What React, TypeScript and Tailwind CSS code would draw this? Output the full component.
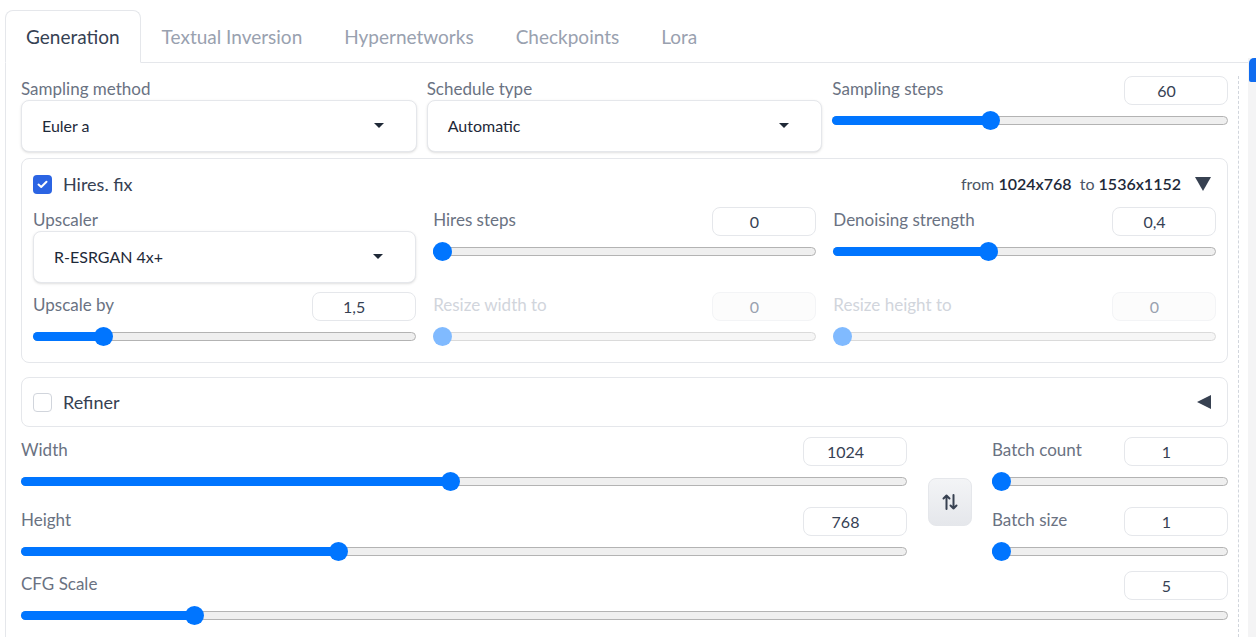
import React from 'react';

const BLUE = 'bg-[#0075ff]';

interface SliderProps {
  value: number;
  min: number;
  max: number;
  disabled?: boolean;
}

const Slider: React.FC<SliderProps> = ({ value, min, max, disabled }) => {
  const frac = (value - min) / (max - min);
  return (
    <div className="relative h-[30px] flex items-center">
      <div
        className={`relative w-full h-[9px] rounded-full border ${
          disabled ? 'bg-[#f6f6f6] border-[#dadada]' : 'bg-[#efefef] border-[#b3b3b3]'
        }`}
      >
        {!disabled && (
          <div
            className={`absolute -left-px -top-px -bottom-px rounded-full ${BLUE}`}
            style={{ width: `calc(${frac} * (100% - 19px) + 11px)` }}
          />
        )}
      </div>
      <div
        className={`absolute w-[19px] h-[19px] rounded-full ${disabled ? 'bg-[#80baff]' : BLUE}`}
        style={{ left: `calc(${frac} * (100% - 19px))` }}
      />
    </div>
  );
};

const NumberBox: React.FC<{ value: string; disabled?: boolean }> = ({ value, disabled }) => (
  <div
    className={`w-[104px] h-[29px] rounded-lg border flex items-center justify-center pr-[19px] text-[16px] ${
      disabled ? 'border-gray-100 bg-[#fcfcfc] text-gray-400' : 'border-gray-200 bg-white text-gray-700'
    }`}
  >
    {value}
  </div>
);

interface FieldProps extends SliderProps {
  label: string;
  display: string;
}

const SliderField: React.FC<FieldProps> = ({ label, display, ...rest }) => (
  <div className="flex flex-col">
    <div className="flex items-start justify-between h-[29px]">
      <span className={`relative top-px leading-[24px] text-[17px] ${rest.disabled ? 'text-gray-300' : 'text-gray-500'}`}>
        {label}
      </span>
      <NumberBox value={display} disabled={rest.disabled} />
    </div>
    <Slider {...rest} />
  </div>
);

const Caret = () => (
  <svg width="10" height="6" viewBox="0 0 10 6" className="mr-[10px]">
    <polygon points="0,0 10,0 5,5" fill="#1f2937" />
  </svg>
);

const Dropdown: React.FC<{ label: string; value: string }> = ({ label, value }) => (
  <div className="flex flex-col">
    <span className="relative top-px leading-[24px] text-[17px] text-gray-500">{label}</span>
    <div className="h-[52px] rounded-lg border border-gray-200 shadow-sm bg-white flex items-center justify-between pl-[20px] pr-[22px] text-[16px] text-gray-800">
      <span>{value}</span>
      <Caret />
    </div>
  </div>
);

const Checkbox: React.FC<{ checked?: boolean }> = ({ checked }) =>
  checked ? (
    <div className="w-[19px] h-[19px] rounded-[4px] bg-[#2b64e3] flex items-center justify-center">
      <svg width="11" height="9" viewBox="0 0 11 9">
        <path d="M1.5 4.6 L4.2 7 L9.5 1.8" fill="none" stroke="white" strokeWidth="2" strokeLinecap="round" strokeLinejoin="round" />
      </svg>
    </div>
  ) : (
    <div className="w-[19px] h-[19px] rounded-[4px] border border-gray-300 bg-white" />
  );

const tabs = ['Textual Inversion', 'Hypernetworks', 'Checkpoints', 'Lora'];

export default function App() {
  return (
    <div className="w-[1256px] h-[637px] overflow-hidden bg-white flex font-['Source_Sans_Pro','Lato',sans-serif]">
      <div className="w-[1243px] ml-[5px] flex flex-col">
        {/* tab strip */}
        <div className="flex items-end pt-[10px] border-b border-gray-200">
          <div className="h-[53px] -mb-px px-[20px] pt-[2px] flex items-center rounded-t-lg border border-gray-200 border-b-white bg-white text-[19px] text-gray-700">
            Generation
          </div>
          {tabs.map((t) => (
            <div key={t} className="h-[52px] px-[21px] pt-[2px] flex items-center text-[19px] text-gray-400">
              {t}
            </div>
          ))}
        </div>

        {/* panel */}
        <div className="flex flex-1 border-l border-gray-200 pl-[15px]">
          <div className="w-[1207px] pt-[13px] flex flex-col">
            <div className="grid grid-cols-3 gap-x-[10px]">
              <Dropdown label="Sampling method" value="Euler a" />
              <Dropdown label="Schedule type" value="Automatic" />
              <SliderField label="Sampling steps" display="60" value={60} min={1} max={150} />
            </div>

            {/* Hires. fix */}
            <div className="mt-[6px] rounded-lg border border-gray-200 px-[11px] pt-[14px] pb-[11px]">
              <div className="flex items-center justify-between h-[22px]">
                <div className="flex items-center gap-[11px]">
                  <Checkbox checked />
                  <span className="text-[18px] text-gray-700">Hires. fix</span>
                </div>
                <div className="flex items-center gap-[14px]">
                  <span className="text-[16px] text-gray-600">
                    from <span className="font-semibold text-gray-800">1024x768</span>
                    &nbsp; to <span className="font-semibold text-gray-800">1536x1152</span>
                  </span>
                  <svg width="16" height="14" viewBox="0 0 16 14" className="mr-[5px]">
                    <polygon points="0,0 16,0 8,14" fill="#374151" />
                  </svg>
                </div>
              </div>
              <div className="mt-[12px] grid grid-cols-3 gap-x-[17.5px] gap-y-[9px]">
                <Dropdown label="Upscaler" value="R-ESRGAN 4x+" />
                <SliderField label="Hires steps" display="0" value={0} min={0} max={150} />
                <SliderField label="Denoising strength" display="0,4" value={0.4} min={0} max={1} />
                <SliderField label="Upscale by" display="1,5" value={1.5} min={1} max={4} />
                <SliderField label="Resize width to" display="0" value={0} min={0} max={2048} disabled />
                <SliderField label="Resize height to" display="0" value={0} min={0} max={2048} disabled />
              </div>
            </div>

            {/* Refiner */}
            <div className="mt-[14px] h-[50px] rounded-lg border border-gray-200 px-[11px] flex items-center justify-between">
              <div className="flex items-center gap-[11px]">
                <Checkbox />
                <span className="text-[18px] text-gray-700">Refiner</span>
              </div>
              <svg width="14" height="14" viewBox="0 0 14 14" className="mr-[5px]">
                <polygon points="14,0 14,14 0,7" fill="#374151" />
              </svg>
            </div>

            {/* dimensions + batch */}
            <div className="mt-[10px] flex">
              <div className="w-[886px] flex flex-col gap-[11px]">
                <SliderField label="Width" display="1024" value={1024} min={64} max={2048} />
                <SliderField label="Height" display="768" value={768} min={64} max={2048} />
              </div>
              <div className="w-[85px] flex items-center justify-center">
                <div className="w-[44px] h-[48px] rounded-lg border border-gray-200 bg-gradient-to-b from-gray-100 to-gray-200 flex items-center justify-center">
                  <svg width="16" height="16" viewBox="0 0 16 16" fill="none" stroke="#374151" strokeWidth="2" strokeLinecap="round" strokeLinejoin="round">
                    <path d="M4.5 15V1.5 M1.5 4.5 L4.5 1.5 L7.5 4.5" />
                    <path d="M11.5 1V14.5 M8.5 11.5 L11.5 14.5 L14.5 11.5" />
                  </svg>
                </div>
              </div>
              <div className="w-[236px] flex flex-col gap-[11px]">
                <SliderField label="Batch count" display="1" value={1} min={1} max={100} />
                <SliderField label="Batch size" display="1" value={1} min={1} max={8} />
              </div>
            </div>

            <div className="mt-[5px]">
              <SliderField label="CFG Scale" display="5" value={5} min={1} max={30} />
            </div>
          </div>
          <div className="ml-[10px] mt-[13px] w-px border-l border-dashed border-gray-300" />
        </div>
      </div>

      {/* side strip */}
      <div className="w-[8px] mt-[58px] bg-[#f4f4f5]">
        <div className="ml-px h-[24px] rounded-tl-[5px] rounded-bl-[2px] bg-[#0f6cf0]" />
      </div>
    </div>
  );
}
